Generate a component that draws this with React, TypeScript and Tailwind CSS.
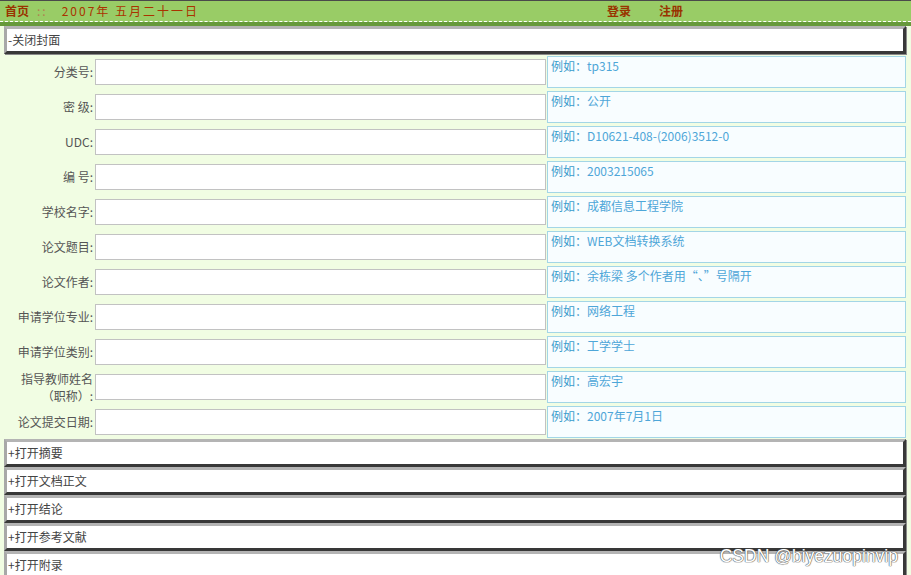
import React from 'react';

const font = { fontFamily: '"Noto Sans CJK SC", "Liberation Sans", sans-serif' };

const rows: { label: React.ReactNode; hint: string; value: string }[] = [
  { label: '分类号:', hint: '例如：', value: 'tp315' },
  { label: '密  级:', hint: '例如：', value: '公开' },
  { label: 'UDC:', hint: '例如：', value: 'D10621-408-(2006)3512-0' },
  { label: '编  号:', hint: '例如：', value: '2003215065' },
  { label: '学校名字:', hint: '例如：', value: '成都信息工程学院' },
  { label: '论文题目:', hint: '例如：', value: 'WEB文档转换系统' },
  { label: '论文作者:', hint: '例如：', value: '余栋梁  多个作者用“、”号隔开' },
  { label: '申请学位专业:', hint: '例如：', value: '网络工程' },
  { label: '申请学位类别:', hint: '例如：', value: '工学学士' },
  {
    label: (
      <>
        <span className="block leading-[17px]">指导教师姓名</span>
        <span className="block leading-[17px]">（职称）:</span>
      </>
    ),
    hint: '例如：',
    value: '高宏宇',
  },
  { label: '论文提交日期:', hint: '例如：', value: '2007年7月1日' },
];

const sections = ['+打开摘要', '+打开文档正文', '+打开结论', '+打开参考文献', '+打开附录'];

function Bar({ title }: { title: string }) {
  return (
    <div className="h-[28px] w-[902px] border-t-[3px] border-l-[3px] border-t-[#b4b4b4] border-l-[#a8a8a8] border-b-[3px] border-r-[3px] border-b-[#383838] border-r-[#383838] bg-white shadow-[1px_1px_0_#8a8a8a] flex items-center pl-[1px] text-[12px] leading-[14px] text-[#444]">
      {title}
    </div>
  );
}

export default function App() {
  return (
    <div className="relative w-[911px] h-[575px] overflow-hidden bg-[#f1fde3]" style={font}>
      {/* Header */}
      <div className="h-[26px] border-t border-[#4a4a4a] bg-[#99cc66] flex flex-col">
        <div className="h-[20px] flex items-center text-[12px] leading-[14px] pl-[5px]">
          <span className="font-bold text-[#993300]">首页</span>
          <span className="ml-[8px] text-[#b08050] tracking-[2px]">::</span>
          <span className="ml-[14px] text-[#aa3300] tracking-[2px]">2007年 五月二十一日</span>
          <span className="ml-[408px] font-bold text-[#993300]">登录</span>
          <span className="ml-[28px] font-bold text-[#993300]">注册</span>
        </div>
        <div className="h-[1px] border-t border-dashed border-white" />
        <div className="flex-1 bg-[#66993a]" />
      </div>

      <div className="pl-[4px]">
        <Bar title="-关闭封面" />

        {/* Cover form */}
        <div className="flex flex-col">
          {rows.map((r, i) => (
            <div key={i} className="h-[35px] flex items-center">
              <div className="w-[89px] text-right text-[12px] leading-[15px] text-[#555]">{r.label}</div>
              <div className="ml-[2px] w-[451px] h-[26px] border border-[#c2c2c2] bg-white" />
              <div className="ml-[1px] w-[359px] h-[32px] border border-[#a3d6e6] bg-[#f8fdff] px-[3px] pt-[1px] text-[12px] leading-[16px]">
                <span className="text-[#3a9ccc]">{r.hint}</span>
                <span className="text-[#4ea6d8]">{r.value}</span>
              </div>
            </div>
          ))}
        </div>

        <div className="flex flex-col">
          {sections.map((s) => (
            <Bar key={s} title={s} />
          ))}
        </div>
      </div>

      <div
        className="absolute right-[13px] bottom-[9px] text-[17.5px] leading-[20px] text-white"
        style={{ fontFamily: '"Liberation Sans", sans-serif', textShadow: '0 0 1px #555, 0 0 1px #555, 0 0 1px #555' }}
      >
        CSDN @biyezuopinvip
      </div>
    </div>
  );
}
